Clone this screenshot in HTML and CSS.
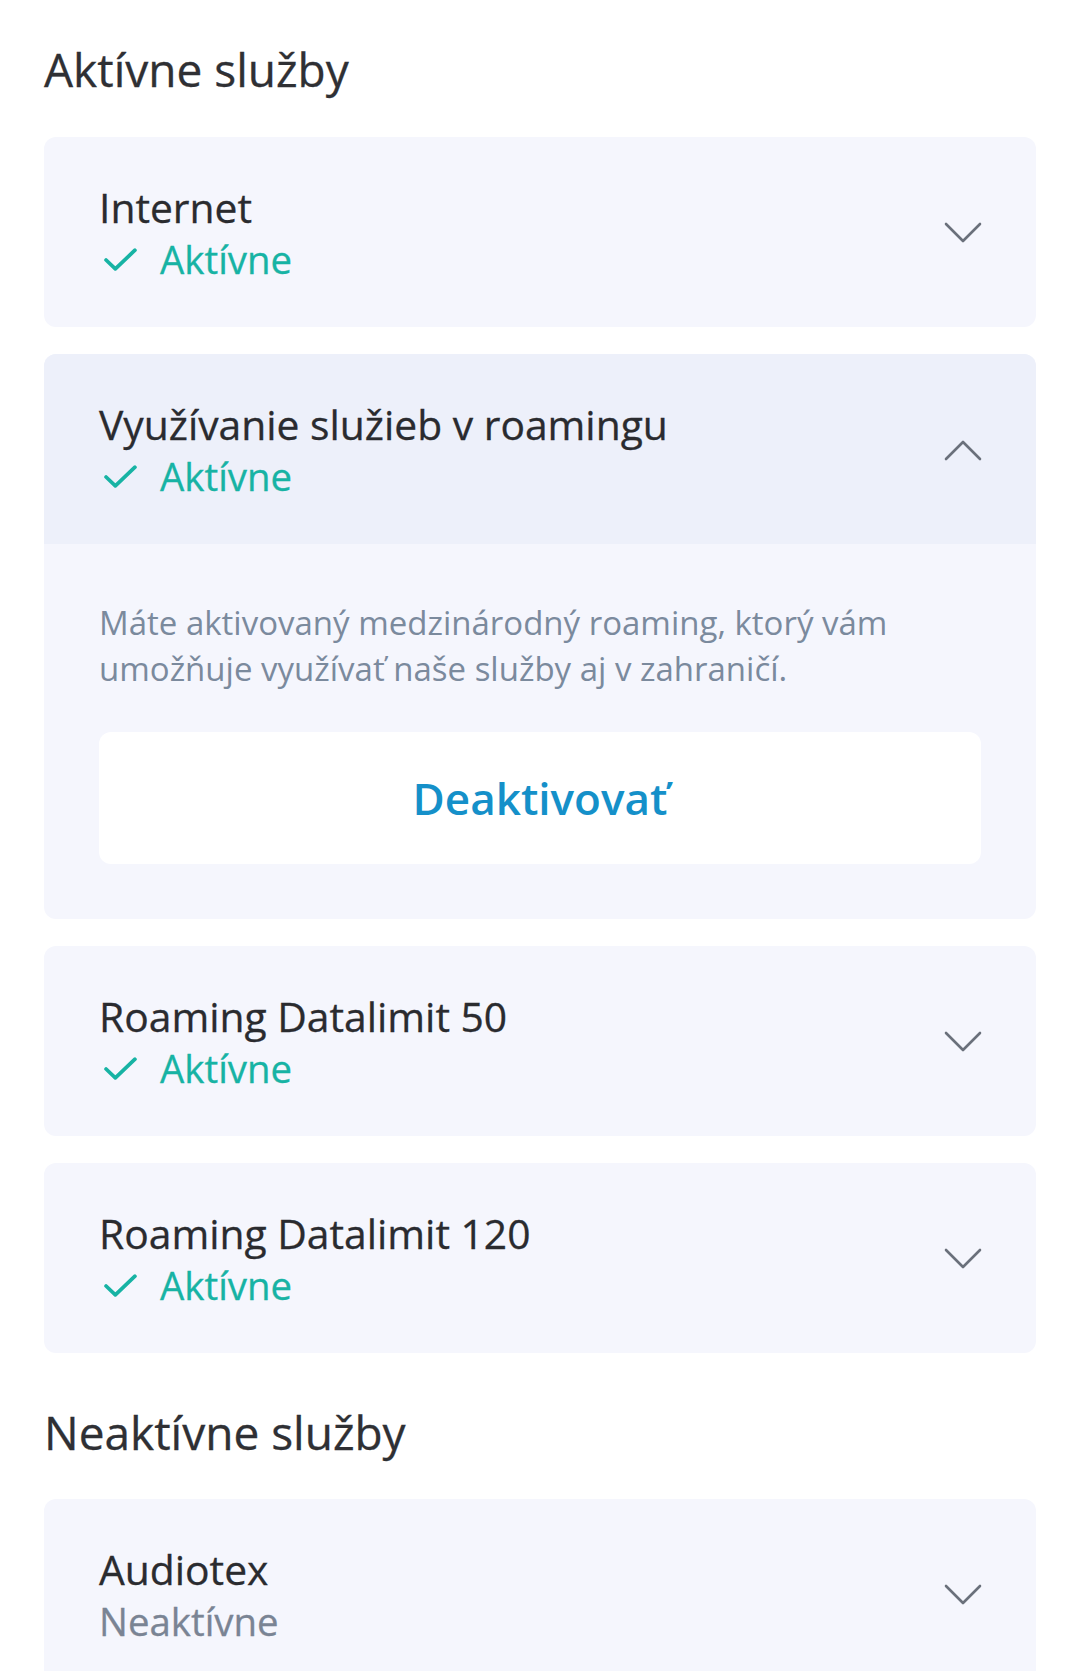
FILE: index.html
```html
<!DOCTYPE html>
<html lang="sk">
<head>
<meta charset="utf-8">
<title>Služby</title>
<link rel="stylesheet" href="styles.css">
</head>
<body>
<main class="page">
  <h2 class="section-title">Aktívne služby</h2>
  <div class="list">
    <div class="card">
      <div class="card-head">
        <div class="info">
          <div class="name">Internet</div>
          <div class="status active"><svg class="check" viewBox="0 0 32 24"><path d="M2 12.5 L11 21 L30 3"/></svg>Aktívne</div>
        </div>
        <svg class="chev" viewBox="0 0 38 22"><path d="M2 2 L19 19 L36 2"/></svg>
      </div>
    </div>

    <div class="card open">
      <div class="card-head">
        <div class="info">
          <div class="name">Využívanie služieb v roamingu</div>
          <div class="status active"><svg class="check" viewBox="0 0 32 24"><path d="M2 12.5 L11 21 L30 3"/></svg>Aktívne</div>
        </div>
        <svg class="chev" viewBox="0 0 38 22"><path d="M2 20 L19 3 L36 20"/></svg>
      </div>
      <div class="card-body">
        <p class="desc">Máte aktivovaný medzinárodný roaming, ktorý vám umožňuje využívať naše služby aj v zahraničí.</p>
        <button class="btn">Deaktivovať</button>
      </div>
    </div>

    <div class="card">
      <div class="card-head">
        <div class="info">
          <div class="name">Roaming Datalimit 50</div>
          <div class="status active"><svg class="check" viewBox="0 0 32 24"><path d="M2 12.5 L11 21 L30 3"/></svg>Aktívne</div>
        </div>
        <svg class="chev" viewBox="0 0 38 22"><path d="M2 2 L19 19 L36 2"/></svg>
      </div>
    </div>

    <div class="card">
      <div class="card-head">
        <div class="info">
          <div class="name">Roaming Datalimit 120</div>
          <div class="status active"><svg class="check" viewBox="0 0 32 24"><path d="M2 12.5 L11 21 L30 3"/></svg>Aktívne</div>
        </div>
        <svg class="chev" viewBox="0 0 38 22"><path d="M2 2 L19 19 L36 2"/></svg>
      </div>
    </div>
  </div>

  <h2 class="section-title second">Neaktívne služby</h2>
  <div class="list">
    <div class="card">
      <div class="card-head">
        <div class="info">
          <div class="name">Audiotex</div>
          <div class="status inactive">Neaktívne</div>
        </div>
        <svg class="chev" viewBox="0 0 38 22"><path d="M2 2 L19 19 L36 2"/></svg>
      </div>
    </div>
  </div>
</main>
</body>
</html>
```

FILE: styles.css
```css
* { box-sizing: border-box; }
html, body { margin: 0; padding: 0; background: #ffffff; }
body {
  font-family: "Open Sans", "Noto Sans", "DejaVu Sans", sans-serif;
  color: #2e2f33;
}
.page {
  padding: 39px 44px 0 44px;
}
.section-title {
  margin: 0 0 38px 0;
  font-size: 46px;
  line-height: 60px;
  font-weight: 500;
  color: #2f3034;
  -webkit-text-stroke: 0.3px #2f3034;
}
.section-title.second {
  margin-top: 49px;
  margin-bottom: 37px;
}
.list {
  display: flex;
  flex-direction: column;
  gap: 27px;
}
.card {
  background: #f5f6fd;
  border-radius: 12px;
  overflow: hidden;
}
.card-head {
  display: flex;
  align-items: center;
  justify-content: space-between;
  padding: 46px 54px 43px 55px;
}
.card.open .card-head {
  background: #edf0fa;
}
.info {
  display: flex;
  flex-direction: column;
}
.name {
  font-size: 40.8px;
  line-height: 49px;
  font-weight: 500;
  color: #2a2b2f;
  -webkit-text-stroke: 0.3px #2a2b2f;
}
.status {
  display: flex;
  align-items: center;
  margin-top: 3px;
  font-size: 38.4px;
  line-height: 49px;
  font-weight: 500;
}
.status.active { color: #17b3a4; -webkit-text-stroke: 0.3px #17b3a4; }
.status.inactive { color: #7a8494; -webkit-text-stroke: 0.3px #7a8494; }
.check {
  width: 33px;
  height: 25px;
  margin: 0 23px 0 5px;
  fill: none;
  stroke: #17b3a4;
  stroke-width: 3.6;
  stroke-linecap: round;
  stroke-linejoin: round;
}
.chev {
  width: 38px;
  height: 22px;
  fill: none;
  stroke: #6a707b;
  stroke-width: 2.6;
  stroke-linecap: round;
  stroke-linejoin: round;
  margin-top: -2px;
}
.card-body {
  padding: 56px 55px 55px 55px;
}
.desc {
  margin: 0;
  font-size: 33px;
  line-height: 46px;
  color: #7b8a9d;
}
.btn {
  display: block;
  width: 100%;
  height: 132px;
  margin-top: 40px;
  border: none;
  border-radius: 12px;
  background: #ffffff;
  font-family: "Open Sans", "Noto Sans", sans-serif;
  font-size: 44px;
  font-weight: 600;
  color: #1590c9;
}
```
